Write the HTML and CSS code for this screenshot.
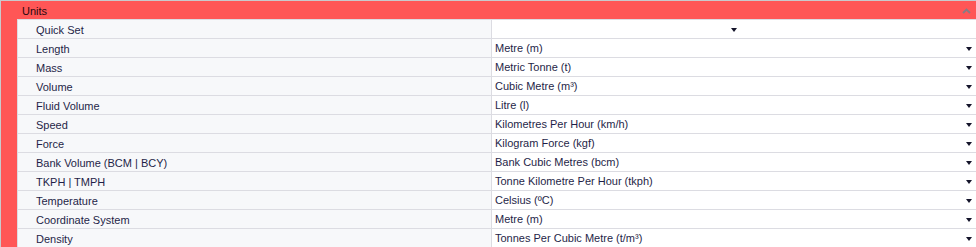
FILE: index.html
```html
<!DOCTYPE html>
<html>
<head>
<meta charset="utf-8">
<link rel="stylesheet" href="styles.css">
</head>
<body>
<div class="panel">
  <div class="header">
    <span class="title">Units</span>
    <svg class="caret" width="9" height="6" viewBox="0 0 9 6"><path d="M1 5 L4.5 1.5 L8 5" fill="none" stroke="#877c84" stroke-width="1.9"/></svg>
  </div>
  <div class="body">
    <div class="rows">
      <div class="row"><div class="label">Quick Set</div><div class="value center"><span class="arrow"></span></div></div>
      <div class="row"><div class="label">Length</div><div class="value"><span>Metre (m)</span><span class="arrow"></span></div></div>
      <div class="row"><div class="label">Mass</div><div class="value"><span>Metric Tonne (t)</span><span class="arrow"></span></div></div>
      <div class="row"><div class="label">Volume</div><div class="value"><span>Cubic Metre (m³)</span><span class="arrow"></span></div></div>
      <div class="row"><div class="label">Fluid Volume</div><div class="value"><span>Litre (l)</span><span class="arrow"></span></div></div>
      <div class="row"><div class="label">Speed</div><div class="value"><span>Kilometres Per Hour (km/h)</span><span class="arrow"></span></div></div>
      <div class="row"><div class="label">Force</div><div class="value"><span>Kilogram Force (kgf)</span><span class="arrow"></span></div></div>
      <div class="row"><div class="label">Bank Volume (BCM | BCY)</div><div class="value"><span>Bank Cubic Metres (bcm)</span><span class="arrow"></span></div></div>
      <div class="row"><div class="label">TKPH | TMPH</div><div class="value"><span>Tonne Kilometre Per Hour (tkph)</span><span class="arrow"></span></div></div>
      <div class="row"><div class="label">Temperature</div><div class="value"><span>Celsius (ºC)</span><span class="arrow"></span></div></div>
      <div class="row"><div class="label">Coordinate System</div><div class="value"><span>Metre (m)</span><span class="arrow"></span></div></div>
      <div class="row"><div class="label">Density</div><div class="value"><span>Tonnes Per Cubic Metre (t/m³)</span><span class="arrow"></span></div></div>
    </div>
  </div>
</div>
</body>
</html>
```
FILE: styles.css
```css
html, body {
  margin: 0;
  padding: 0;
  background: #ffffff;
  overflow: hidden;
}
.panel {
  width: 976px;
  height: 247px;
  font-family: "Liberation Sans", Arial, sans-serif;
  font-size: 11px;
  color: #1f1f48;
  border-top: 1px solid #c9c9cc;
  border-left: 1px solid #c9c9cc;
  box-sizing: border-box;
  background: #ff5656;
  display: flex;
  flex-direction: column;
}
.header {
  height: 18px;
  display: flex;
  align-items: center;
  justify-content: space-between;
  padding: 0 5px 0 21px;
  color: #2a0a10;
}
.title { line-height: 20px; height: 18px; }
.caret { margin-top: 1px; }
.body {
  flex: 1;
  padding-left: 16px;
  display: flex;
}
.rows {
  flex: 1;
  background: #ffffff;
  border-top: 1px solid #dcdce2;
  border-left: 1px solid #dcdce2;
}
.row {
  height: 18px;
  border-bottom: 1px solid #dcdce2;
  display: flex;
  overflow: hidden;
}
.label {
  width: 455px;
  height: 18px;
  padding-left: 18px;
  background: #f7f8fa;
  border-right: 1px solid #dcdce2;
  line-height: 20px;
  white-space: nowrap;
}
.value {
  flex: 1;
  height: 18px;
  display: flex;
  align-items: center;
  justify-content: space-between;
  padding: 0 4px 0 3px;
  line-height: 20px;
  white-space: nowrap;
}
.value.center { justify-content: center; padding-left: 4px; }
.arrow {
  width: 0;
  height: 0;
  margin-top: 2px;
  border-left: 3.5px solid transparent;
  border-right: 3.5px solid transparent;
  border-top: 4px solid #14142a;
}
```
